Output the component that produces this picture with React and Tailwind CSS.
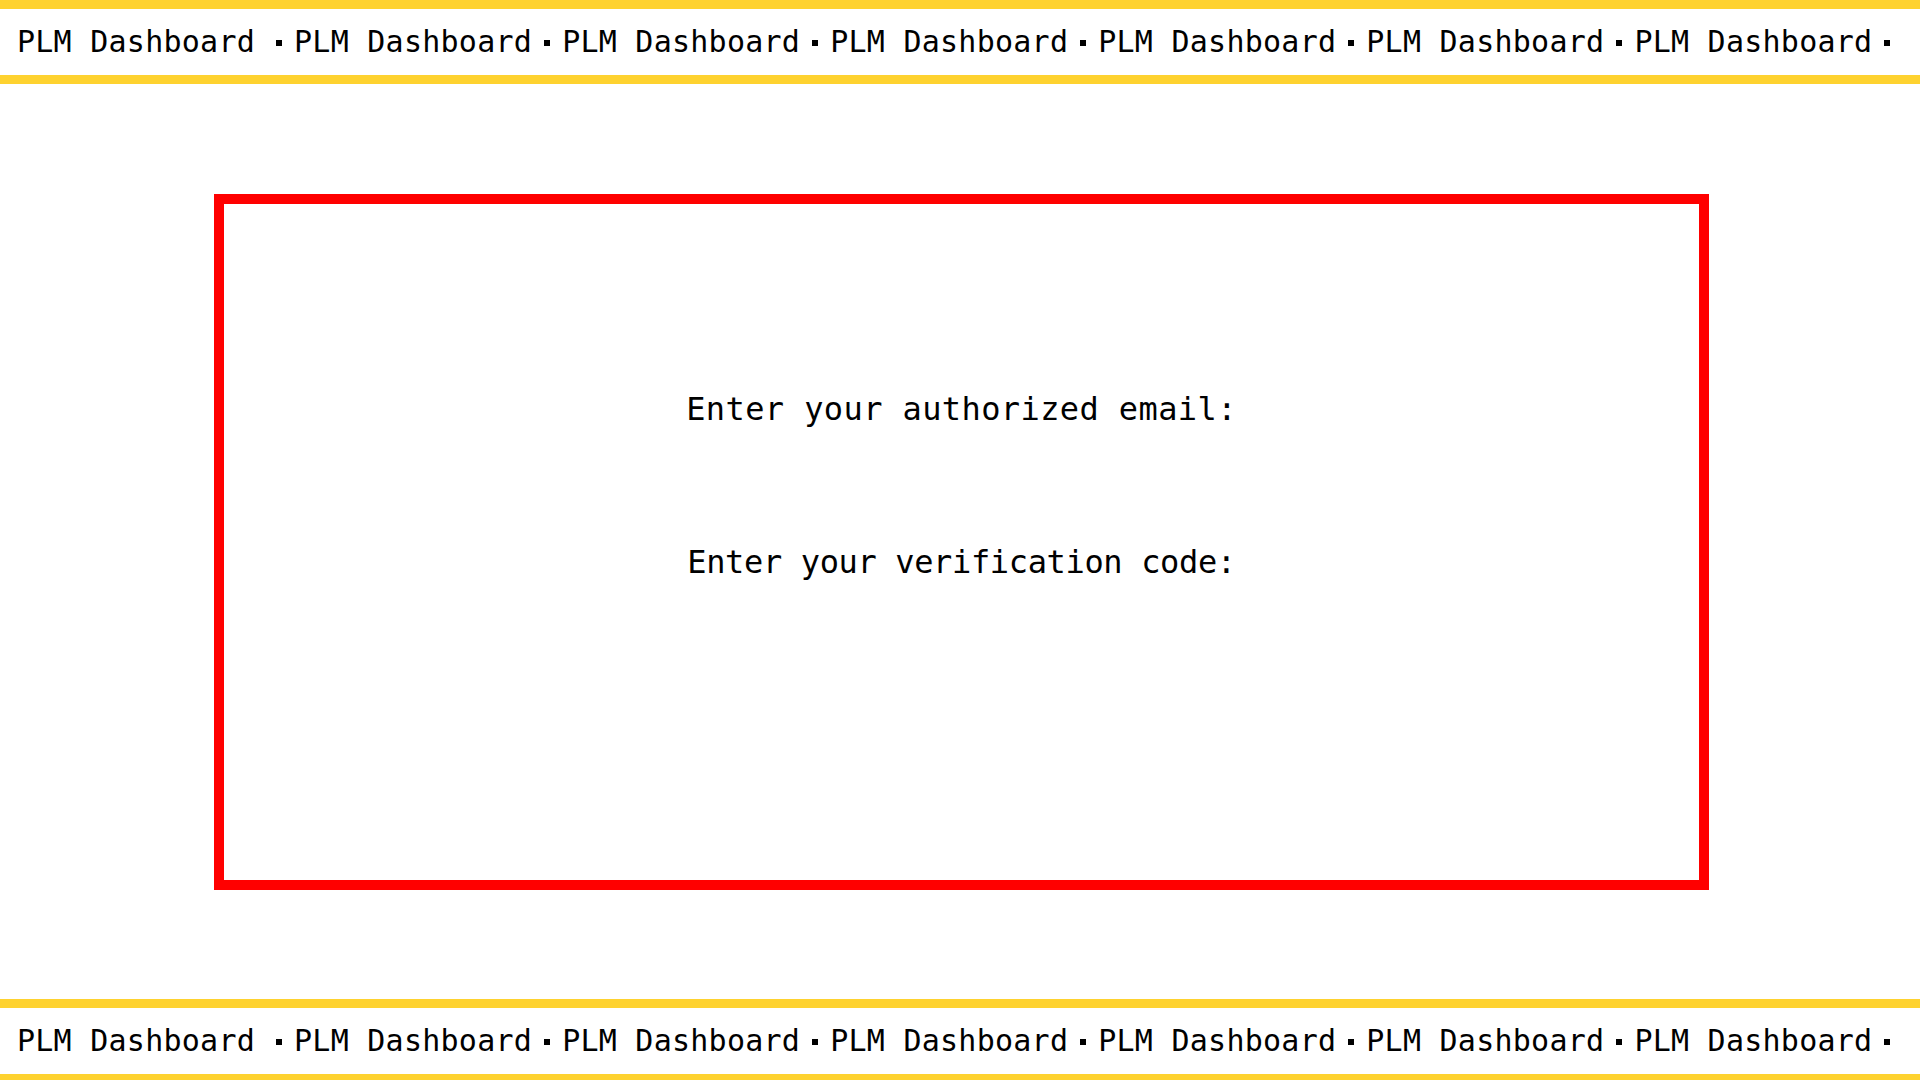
import React from 'react';

const ITEMS = 7;

function Ticker() {
    return (
        <div className="h-[84px] shrink-0 border-y-[9px] border-[#fed22f] bg-white flex items-center overflow-hidden">
            <div className="flex items-center pl-[17px] whitespace-nowrap text-[30px] leading-none text-black tracking-[0.25px] font-['DejaVu_Sans_Mono',monospace]">
                {Array.from({ length: ITEMS }).map((_, i) => (
                    <div key={i} className="flex items-center shrink-0">
                        <span>PLM Dashboard</span>
                        <span className={(i === 0 ? 'ml-[21px]' : 'ml-[12px]') + ' mr-[12px] w-[6px] h-[6px] bg-black mt-[2px]'}></span>
                    </div>
                ))}
            </div>
        </div>
    );
}

export default function App() {
    return (
        <div className="w-[1920px] flex flex-col bg-white">
            <Ticker />

            {/* login box */}
            <div className="h-[915px] flex items-center justify-center">
                <div className="w-[1495px] h-[696px] ml-[3px] border-[10px] border-[#ff0000] flex flex-col items-center pt-[185px] text-black font-['DejaVu_Sans_Mono',monospace] text-[32px] leading-[40px]">
                    <label className="block tracking-[0.4px]">Enter your authorized email:</label>
                    <label className="block mt-[113px] tracking-[-0.35px]">Enter your verification code:</label>
                </div>
            </div>

            <Ticker />
        </div>
    );
}
